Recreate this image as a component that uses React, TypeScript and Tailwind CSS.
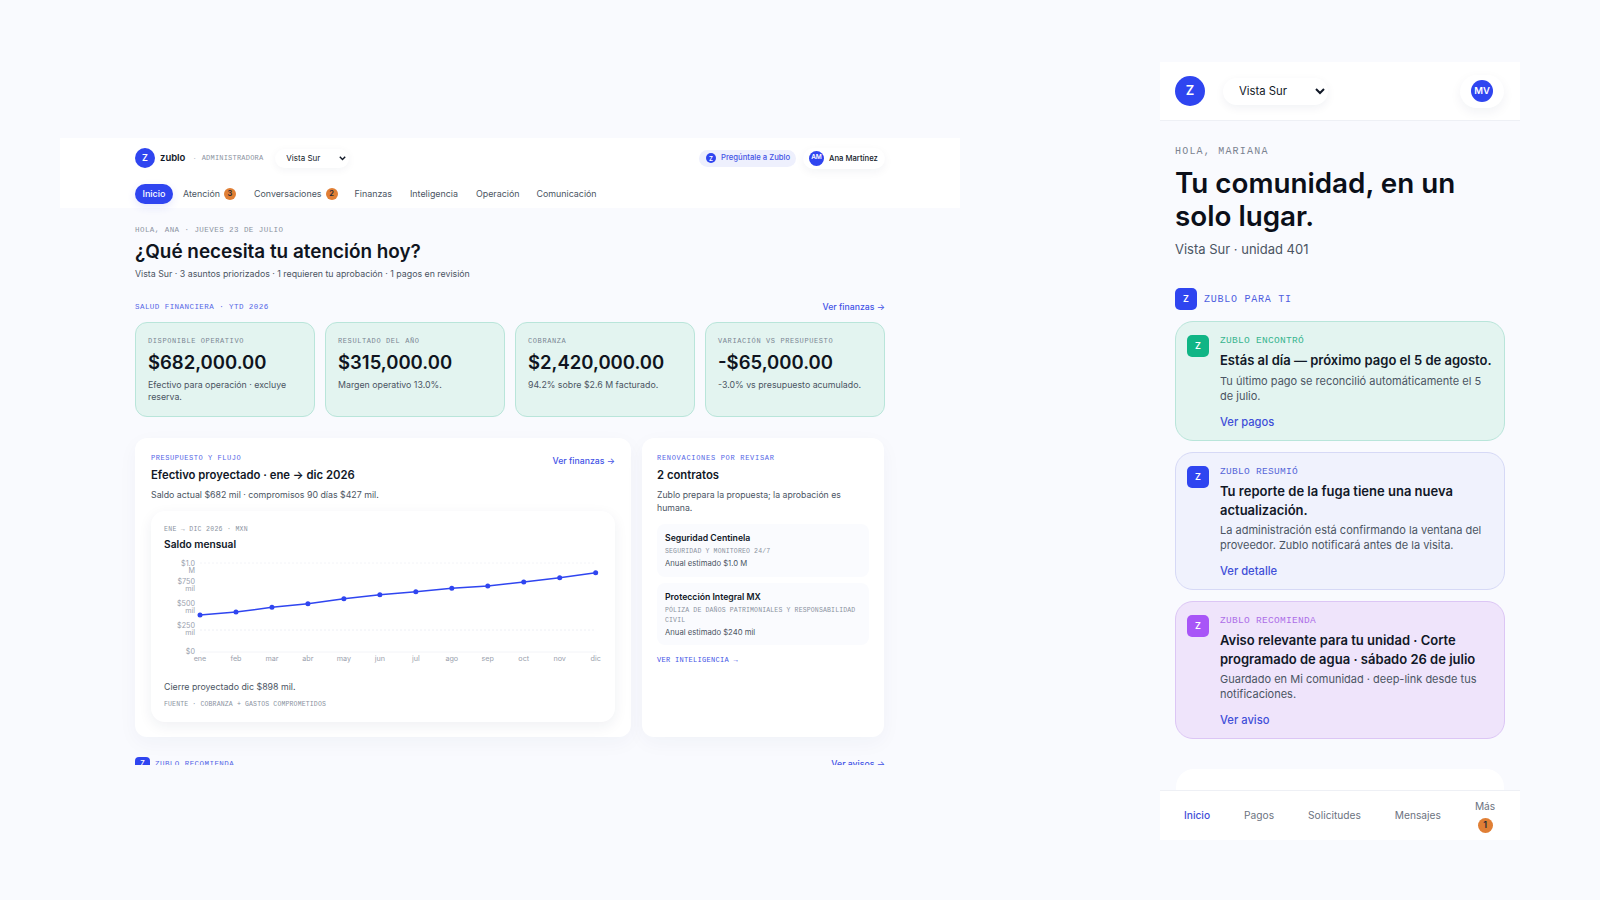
import React from "react";

const mono = "font-['Liberation_Mono',monospace]";

function Z({ cls }: { cls: string }) {
  return <div className={`flex shrink-0 items-center justify-center font-semibold text-white ${cls}`}>Z</div>;
}

function Kpi({ label, value, sub }: { label: string; value: string; sub: string }) {
  return (
    <div className="h-[95px] rounded-[12px] border border-[#b9e5da] bg-[#e3f4f0] px-[12px] pt-[13px]">
      <div className={`${mono} text-[7px] leading-[10px] tracking-[0.6px] text-[#7b8794]`}>{label}</div>
      <div className="mt-[3px] text-[18.5px] font-semibold leading-[26px] text-[#0f1420]">{value}</div>
      <div className="mt-[4px] text-[8.8px] leading-[12px] text-[#4b5563]">{sub}</div>
    </div>
  );
}

const months = ["ene", "feb", "mar", "abr", "may", "jun", "jul", "ago", "sep", "oct", "nov", "dic"];
const ys = [615, 612, 607.3, 603.7, 598.7, 594.7, 591.7, 588.3, 586, 582, 577.7, 572.7];

function Chart() {
  const pts = ys.map((y, i) => [36 + i * 35.97, y - 555]);
  const yl: [string, string, number][] = [
    ["$1.0", "M", 9],
    ["$750", "mil", 27],
    ["$500", "mil", 49],
    ["$250", "mil", 71],
  ];
  return (
    <svg width="439" height="110" className="mt-[3px] block" fontFamily="Inter, sans-serif" fontSize="7.2" fill="#9aa1ad">
      <line x1="36" x2="432" y1="8" y2="8" stroke="#f3f4f8" strokeDasharray="2 2" />
      <line x1="36" x2="432" y1="75" y2="75" stroke="#eef0f5" strokeDasharray="2 2" />
      <line x1="36" x2="432" y1="97" y2="97" stroke="#f3f4f8" />
      {yl.map(([a, b, y]) => (
        <g key={a} textAnchor="end">
          <text x="31" y={y + 2}>{a}</text>
          <text x="31" y={y + 9}>{b}</text>
        </g>
      ))}
      <text x="31" y="99" textAnchor="end">$0</text>
      <polyline points={pts.map((p) => p.join(",")).join(" ")} fill="none" stroke="#2f45f0" strokeWidth="1.5" />
      {pts.map((p, i) => (
        <g key={i}>
          <circle cx={p[0]} cy={p[1]} r="2.5" fill="#2f45f0" />
          <text x={p[0]} y="106" textAnchor="middle">{months[i]}</text>
        </g>
      ))}
    </svg>
  );
}

function Contract({ name, tag, amount, cls }: { name: string; tag: string; amount: string; cls: string }) {
  return (
    <div className={`rounded-[8px] bg-[#fafbfe] pr-[4px] pl-[8px] pt-[7.5px] ${cls}`}>
      <div className="text-[8.7px] font-semibold leading-[13px] text-[#111827]">{name}</div>
      <div className={`${mono} mt-[2px] text-[6.5px] leading-[10px] tracking-[0.15px] text-[#8b93a1]`}>{tag}</div>
      <div className="mt-[1px] text-[7.7px] leading-[12px] text-[#4b5563]">{amount}</div>
    </div>
  );
}

function NavItem({ children, badge, cls = "" }: { children: string; badge?: string; cls?: string }) {
  return (
    <div className={`flex items-center text-[8.9px] text-[#4b5563] ${cls}`}>
      {children}
      {badge && (
        <span className="ml-[4px] flex h-[12px] w-[12px] items-center justify-center rounded-full bg-[#e07f35] text-[7.5px] font-semibold text-[#1f2937]">
          {badge}
        </span>
      )}
    </div>
  );
}

function Desktop() {
  return (
    <div className="mt-[138px] ml-[60px] h-[627px] w-[900px] shrink-0 overflow-hidden">
      <header className="h-[70px] bg-white pr-[75px] pl-[75px]">
        <div className="flex h-[40px] items-center">
          <Z cls="h-[20px] w-[20px] rounded-full bg-[#2f45f0] text-[9px]" />
          <span className="ml-[5px] text-[9.5px] font-semibold text-[#111827]">zublo</span>
          <span className="ml-[8px] text-[8px] text-[#b0b6c2]">·</span>
          <span className={`${mono} ml-[6px] text-[7px] tracking-[0.2px] text-[#8b93a1]`}>ADMINISTRADORA</span>
          <div className="relative ml-[12px] h-[19px] w-[74px]">
            <select className="block h-[19px] w-[74px] appearance-none rounded-full bg-white pl-[11px] text-[8px] text-[#111827] shadow-[0_2px_8px_rgba(20,30,80,0.05)]">
              <option>Vista Sur</option>
            </select>
            <svg className="absolute top-[7px] right-[3px]" width="7" height="5" viewBox="0 0 7 5" fill="none" stroke="#111827" strokeWidth="1.4">
              <path d="M0.8 0.8 L3.5 3.6 L6.2 0.8" />
            </svg>
          </div>
          <div className="ml-auto flex h-[17px] w-[97px] items-center rounded-full bg-[#eef0fd] pl-[7px]">
            <Z cls="h-[10px] w-[10px] rounded-full bg-[#2f45f0] text-[6px]" />
            <span className="ml-[5px] whitespace-nowrap text-[7.7px] font-medium text-[#4453e6]">Pregúntale a Zublo</span>
          </div>
          <div className="ml-[7px] flex h-[21px] w-[82px] items-center rounded-full bg-white pl-[6px] shadow-[0_3px_10px_rgba(20,30,80,0.05)]">
            <div className="flex h-[15px] w-[15px] items-center justify-center rounded-full bg-[#2f45f0] text-[6.5px] font-semibold text-white">AM</div>
            <span className="ml-[5px] whitespace-nowrap pt-[1px] text-[7.7px] font-medium text-[#111827]">Ana Martínez</span>
          </div>
        </div>
        <div className="mt-[6px] flex h-[20px] items-center">
          <div className="flex h-[20px] w-[38px] items-center justify-center rounded-full bg-[#2f45f0] text-[9px] font-medium text-white shadow-[0_3px_8px_rgba(47,69,240,0.12)]">Inicio</div>
          <NavItem cls="ml-[10px]" badge="3">Atención</NavItem>
          <NavItem cls="ml-[18px]" badge="2">Conversaciones</NavItem>
          <NavItem cls="ml-[17px]">Finanzas</NavItem>
          <NavItem cls="ml-[18px]">Inteligencia</NavItem>
          <NavItem cls="ml-[18px]">Operación</NavItem>
          <NavItem cls="ml-[17px]">Comunicación</NavItem>
        </div>
      </header>
      <main className="box-content w-[750px] pt-[17px] pl-[75px]">
        <div className="w-[750px]">
          <div className={`${mono} text-[7.5px] leading-[10px] tracking-[0.45px] text-[#8b93a1]`}>HOLA, ANA · JUEVES 23 DE JULIO</div>
          <h1 className="mt-[3px] text-[18.9px] font-semibold leading-[28px] text-[#0f1420]">¿Qué necesita tu atención hoy?</h1>
          <p className="mt-[2px] text-[8.8px] leading-[12px] text-[#4b5563]">Vista Sur · 3 asuntos priorizados · 1 requieren tu aprobación · 1 pagos en revisión</p>
          <div className="mt-[22px] flex h-[12px] items-center justify-between">
            <span className={`${mono} text-[7.5px] tracking-[0.45px] text-[#5566e6]`}>SALUD FINANCIERA · YTD 2026</span>
            <span className="text-[8.7px] font-medium text-[#4453e6]">Ver finanzas →</span>
          </div>
          <div className="mt-[8px] grid grid-cols-4 gap-[10px]">
            <Kpi label="DISPONIBLE OPERATIVO" value="$682,000.00" sub="Efectivo para operación · excluye reserva." />
            <Kpi label="RESULTADO DEL AÑO" value="$315,000.00" sub="Margen operativo 13.0%." />
            <Kpi label="COBRANZA" value="$2,420,000.00" sub="94.2% sobre $2.6 M facturado." />
            <Kpi label="VARIACIÓN VS PRESUPUESTO" value="-$65,000.00" sub="-3.0% vs presupuesto acumulado." />
          </div>
          <div className="mt-[21px] flex h-[299px] gap-[11px]">
            <section className="w-[496px] rounded-[12px] bg-white px-[16px] pt-[15px] shadow-[0_6px_20px_rgba(30,40,90,0.04)]">
              <div className="flex items-start justify-between">
                <div>
                  <div className={`${mono} text-[7px] leading-[10px] tracking-[0.55px] text-[#5566e6]`}>PRESUPUESTO Y FLUJO</div>
                  <div className="mt-[4px] text-[11.3px] font-semibold leading-[17px] text-[#111827]">Efectivo proyectado · ene → dic 2026</div>
                  <div className="mt-[5px] text-[8.8px] leading-[12px] text-[#4b5563]">Saldo actual $682 mil · compromisos 90 días $427 mil.</div>
                </div>
                <span className="mt-[2px] text-[8.7px] font-medium leading-[12px] text-[#4453e6]">Ver finanzas →</span>
              </div>
              <div className="mt-[10px] h-[211px] rounded-[14px] bg-white px-[13px] pt-[14px] shadow-[0_4px_14px_rgba(30,40,90,0.07)]">
                <div className={`${mono} text-[6.5px] leading-[10px] tracking-[0.3px] text-[#8b93a1]`}>ENE → DIC 2026 · MXN</div>
                <div className="mt-[2px] text-[10.2px] font-semibold leading-[15px] text-[#111827]">Saldo mensual</div>
                <Chart />
                <div className="mt-[16px] text-[8.8px] leading-[12px] text-[#4b5563]">Cierre proyectado dic $898 mil.</div>
                <div className={`${mono} mt-[7px] text-[6.5px] leading-[10px] tracking-[0.15px] text-[#8b93a1]`}>FUENTE · COBRANZA + GASTOS COMPROMETIDOS</div>
              </div>
            </section>
            <section className="w-[242px] rounded-[12px] bg-white px-[15px] pt-[15px] shadow-[0_6px_20px_rgba(30,40,90,0.04)]">
              <div className={`${mono} text-[7px] leading-[10px] tracking-[0.7px] text-[#5566e6]`}>RENOVACIONES POR REVISAR</div>
              <div className="mt-[4px] text-[11.3px] font-semibold leading-[17px] text-[#111827]">2 contratos</div>
              <div className="mt-[5px] text-[8.7px] leading-[12.5px] text-[#4b5563]">Zublo prepara la propuesta; la aprobación es humana.</div>
              <Contract cls="mt-[10px] h-[53px]" name="Seguridad Centinela" tag="SEGURIDAD Y MONITOREO 24/7" amount="Anual estimado $1.0 M" />
              <Contract cls="mt-[6px] h-[62px]" name="Protección Integral MX" tag="PÓLIZA DE DAÑOS PATRIMONIALES Y RESPONSABILIDAD CIVIL" amount="Anual estimado $240 mil" />
              <div className={`${mono} mt-[10px] text-[7px] leading-[10px] tracking-[0.3px] text-[#4453e6]`}>VER INTELIGENCIA →</div>
            </section>
          </div>
          <div className="mt-[20px] flex items-center justify-between">
            <div className="flex items-center">
              <Z cls="h-[15px] w-[15px] rounded-[4px] bg-[#2f45f0] text-[7px]" />
              <span className={`${mono} ml-[5px] text-[7.5px] tracking-[0.45px] text-[#5566e6]`}>ZUBLO RECOMIENDA</span>
            </div>
            <span className="text-[8.7px] font-medium text-[#4453e6]">Ver avisos →</span>
          </div>
        </div>
      </main>
    </div>
  );
}

function Card({ cls, icon, labelCls, label, title, body, link }: { cls: string; icon: string; labelCls: string; label: string; title: string; body: string; link: string }) {
  return (
    <div className={`flex rounded-[18px] border pr-[8px] pl-[11px] pt-[13px] ${cls}`}>
      <Z cls={`h-[22px] w-[22px] rounded-[5px] text-[9px] ${icon}`} />
      <div className="ml-[11px] min-w-0 flex-1">
        <div className={`${mono} text-[9.5px] leading-[12px] tracking-[0.3px] ${labelCls}`}>{label}</div>
        <div className="mt-[4px] text-[13px] font-semibold leading-[18.5px] text-[#111827]">{title}</div>
        <div className="mt-[4px] max-w-[268px] text-[11px] leading-[15px] text-[#4b5563]">{body}</div>
        <div className="mt-[11px] text-[11.2px] font-medium leading-[15px] text-[#3f4fd8]">{link}</div>
      </div>
    </div>
  );
}

function Phone() {
  return (
    <div className="mt-[62px] ml-[200px] flex h-[778px] w-[360px] shrink-0 flex-col overflow-hidden">
      <header className="flex h-[59px] shrink-0 items-center border-b border-[#eef0f5] bg-white pl-[15px]">
        <Z cls="h-[30px] w-[30px] rounded-full bg-[#2f45f0] text-[13px]" />
        <select className="ml-[18px] h-[27px] w-[105px] rounded-full bg-white pl-[12px] text-[11.3px] text-[#111827] shadow-[0_3px_10px_rgba(20,30,80,0.06)]">
          <option>Vista Sur</option>
        </select>
        <div className="ml-[132px] flex h-[33px] w-[44px] items-center justify-center rounded-full bg-white shadow-[0_4px_12px_rgba(20,30,80,0.06)]">
          <div className="flex h-[22px] w-[22px] items-center justify-center rounded-full bg-[#2f45f0] text-[9.5px] font-semibold text-white">MV</div>
        </div>
      </header>
      <main className="min-h-0 flex-1 overflow-hidden px-[15px] pt-[24px]">
        <div className={`${mono} text-[10px] leading-[13px] tracking-[1.2px] text-[#7b8390]`}>HOLA, MARIANA</div>
        <h2 className="mt-[9px] text-[27.8px] font-semibold leading-[33px] text-[#0b0f19]">Tu comunidad, en un solo lugar.</h2>
        <p className="mt-[7px] text-[13px] leading-[18px] text-[#4b5563]">Vista Sur · unidad 401</p>
        <div className="mt-[30px] flex items-center">
          <Z cls="h-[22px] w-[22px] rounded-[5px] bg-[#2f45f0] text-[9px]" />
          <span className={`${mono} ml-[7px] text-[10px] tracking-[0.75px] text-[#4f5fe0]`}>ZUBLO PARA TI</span>
        </div>
        <div className="mt-[11px] flex flex-col gap-[11px]">
          <Card cls="h-[120px] border-[#b9e5da] bg-[#e3f4f0]" icon="bg-[#10b585]" labelCls="text-[#38b48f]" label="ZUBLO ENCONTRÓ" title="Estás al día — próximo pago el 5 de agosto." body="Tu último pago se reconcilió automáticamente el 5 de julio." link="Ver pagos" />
          <Card cls="h-[138px] border-[#d6d9f6] bg-[#f0f2fd]" icon="bg-[#2f45f0]" labelCls="text-[#5566d8]" label="ZUBLO RESUMIÓ" title="Tu reporte de la fuga tiene una nueva actualización." body="La administración está confirmando la ventana del proveedor. Zublo notificará antes de la visita." link="Ver detalle" />
          <Card cls="h-[138px] border-[#dcc6f5] bg-[#efe4fb]" icon="bg-[#a855f7]" labelCls="text-[#ad6ee8]" label="ZUBLO RECOMIENDA" title="Aviso relevante para tu unidad · Corte programado de agua · sábado 26 de julio" body="Guardado en Mi comunidad · deep-link desde tus notificaciones." link="Ver aviso" />
        </div>
        <div className="mt-[30px] ml-[1px] h-[40px] w-[328px] rounded-[18px] bg-white" />
      </main>
      <nav className="flex h-[50px] shrink-0 items-center border-t border-[#eef0f5] bg-white text-[10.2px] text-[#6b7280]">
        <span className="ml-[24px] font-medium text-[#3f4fd8]">Inicio</span>
        <span className="ml-[34px]">Pagos</span>
        <span className="ml-[34px]">Solicitudes</span>
        <span className="ml-[34px]">Mensajes</span>
        <div className="ml-[34px] flex flex-col items-center">
          <span className="leading-[14px]">Más</span>
          <span className="mt-[5px] flex h-[15px] w-[15px] items-center justify-center rounded-full bg-[#e07f35] text-[9px] font-semibold text-[#1f2937]">1</span>
        </div>
      </nav>
    </div>
  );
}

export default function App() {
  return (
    <div className="flex h-[900px] w-[1600px] items-start overflow-hidden bg-[#f9fafe] font-['Inter',sans-serif]">
      <Desktop />
      <Phone />
    </div>
  );
}
